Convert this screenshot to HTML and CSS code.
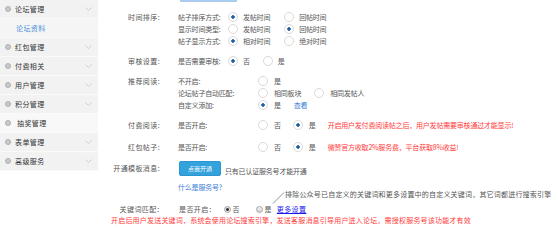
FILE: index.html
```html
<!DOCTYPE html>
<html lang="zh-CN">
<head>
<meta charset="utf-8">
<title>论坛资料</title>
<link rel="stylesheet" href="styles.css">
</head>
<body>
<div class="page">
  <aside class="side">
    <div class="nav-item"><span class="dot"></span><span class="nav-text">论坛管理</span><svg class="chev" viewBox="0 0 7 4"><polyline points="0.5,0.5 3.5,3.5 6.5,0.5"/></svg></div>
    <div class="nav-sub">论坛资料</div>
    <div class="nav-item"><span class="dot"></span><span class="nav-text">红包管理</span><svg class="chev" viewBox="0 0 7 4"><polyline points="0.5,0.5 3.5,3.5 6.5,0.5"/></svg></div>
    <div class="nav-item"><span class="dot"></span><span class="nav-text">付费相关</span><svg class="chev" viewBox="0 0 7 4"><polyline points="0.5,0.5 3.5,3.5 6.5,0.5"/></svg></div>
    <div class="nav-item"><span class="dot"></span><span class="nav-text">用户管理</span><svg class="chev" viewBox="0 0 7 4"><polyline points="0.5,0.5 3.5,3.5 6.5,0.5"/></svg></div>
    <div class="nav-item"><span class="dot"></span><span class="nav-text">积分管理</span><svg class="chev" viewBox="0 0 7 4"><polyline points="0.5,0.5 3.5,3.5 6.5,0.5"/></svg></div>
    <div class="nav-item active"><span class="dot"></span><span class="nav-text">抽奖管理</span></div>
    <div class="nav-item"><span class="dot"></span><span class="nav-text">表单管理</span><svg class="chev" viewBox="0 0 7 4"><polyline points="0.5,0.5 3.5,3.5 6.5,0.5"/></svg></div>
    <div class="nav-item"><span class="dot"></span><span class="nav-text">高级服务</span><svg class="chev" viewBox="0 0 7 4"><polyline points="0.5,0.5 3.5,3.5 6.5,0.5"/></svg></div>
  </aside>

  <main class="main">
    <div class="tabline"></div>

    <div class="group g1">
      <div class="label">时间排序:</div>
      <div class="fields">
        <div class="line"><span class="sub w50">帖子排序方式:</span><span class="opt o14"><i class="radio on"></i>发帖时间</span><span class="opt"><i class="radio"></i>回帖时间</span></div>
        <div class="line"><span class="sub w50">显示时间类型:</span><span class="opt o14"><i class="radio"></i>发帖时间</span><span class="opt"><i class="radio on"></i>回帖时间</span></div>
        <div class="line"><span class="sub w50">帖子显示方式:</span><span class="opt o14"><i class="radio on"></i>相对时间</span><span class="opt"><i class="radio"></i>绝对时间</span></div>
      </div>
    </div>

    <div class="group g2">
      <div class="label">审核设置:</div>
      <div class="fields">
        <div class="line"><span class="sub w50">是否需要审核:</span><span class="opt o13"><i class="radio on"></i>否</span><span class="opt"><i class="radio"></i>是</span></div>
      </div>
    </div>

    <div class="group g3">
      <div class="label">推荐阅读:</div>
      <div class="fields">
        <div class="line"><span class="sub w80">不开启:</span><span class="opt og6"><i class="radio"></i>是</span></div>
        <div class="line"><span class="sub w80">论坛帖子自动匹配:</span><span class="opt og6 o13"><i class="radio"></i>相同板块</span><span class="opt og6"><i class="radio"></i>相同发帖人</span></div>
        <div class="line"><span class="sub w80">自定义添加:</span><span class="opt og6 o13"><i class="radio on"></i>是</span><a class="link">查看</a></div>
      </div>
    </div>

    <div class="group g4">
      <div class="label">付费阅读:</div>
      <div class="fields">
        <div class="line"><span class="sub w80">是否开启:</span><span class="opt og6 o12"><i class="radio"></i>否</span><span class="opt og6 o12"><i class="radio on"></i>是</span><span class="warn">开启用户发付费阅读帖之后，用户发帖需要审核通过才能显示!</span></div>
      </div>
    </div>

    <div class="group g5">
      <div class="label">红包帖子:</div>
      <div class="fields">
        <div class="line"><span class="sub w80">是否开启:</span><span class="opt og6 o12"><i class="radio"></i>否</span><span class="opt og6 o12"><i class="radio on"></i>是</span><span class="warn">微赞官方收取2%服务费，平台获取8%收益!</span></div>
      </div>
    </div>

    <div class="group g6">
      <div class="label">开通模板消息:</div>
      <div class="fields row-center">
        <button class="btn">点我开通</button><span class="note">只有已认证服务号才能开通</span>
      </div>
    </div>

    <div class="group g7">
      <div class="label"></div>
      <div class="fields">
        <div class="line"><a class="link">什么是服务号?</a></div>
      </div>
    </div>

    <div class="group g8">
      <div class="label kw">关键词匹配：</div>
      <div class="kfields">
        <div class="line"><span class="sub w46">是否开启：</span><span class="nopt o16"><i class="nradio on"></i>否</span><span class="nopt o5"><i class="nradio"></i>是</span><a class="more">更多设置</a></div>
      </div>
    </div>

    <div class="warn-line">开启后用户发送关键词，系统会使用论坛搜索引擎，发送客服消息引导用户进入论坛。需授权服务号该功能才有效</div>

    <svg class="tip-line" viewBox="0 0 13 12"><line x1="1" y1="11.5" x2="12" y2="0.5"/></svg>
    <div class="tip">排除公众号已自定义的关键词和更多设置中的自定义关键词，其它词都进行搜索引擎</div>
  </main>
</div>
</body>
</html>
```

FILE: styles.css
```css
* { box-sizing: border-box; }
html, body { margin: 0; padding: 0; background: #fff; }
body {
  font-family: "Noto Sans CJK SC", "Noto Sans", sans-serif;
  font-size: 7px;
  letter-spacing: 0.4px;
  color: #555;
  width: 558px;
  height: 251px;
  overflow: hidden;
}
.page { display: flex; align-items: flex-start; }

/* sidebar */
.side {
  width: 98px;
  flex: none;
  background: #f2f2f2;
}
.nav-item {
  height: 19px;
  display: flex;
  align-items: center;
  padding-left: 5px;
  border-bottom: 1px solid #fafafa;
  color: #333;
}
.dot {
  width: 6px;
  height: 6px;
  border-radius: 50%;
  background: #c9c9c9;
  border: 1px solid #b0b0b0;
  margin-right: 4px;
  flex: none;
}
.nav-text { flex: 1; }
.chev {
  width: 7px;
  height: 4px;
  margin-right: 6px;
  fill: none;
  stroke: #c4c4c4;
  stroke-width: 0.8;
}
.nav-sub {
  height: 19px;
  display: flex;
  align-items: center;
  padding-left: 16px;
  color: #4a90d9;
  background: #f5f5f5;
  border-bottom: 1px solid #fafafa;
}
.nav-item.active { background: #f8f8f8; }
.nav-item.active .nav-text { padding-left: 2px; }

/* main */
.main {
  flex: 1;
  position: relative;
  height: 251px;
}
.tabline {
  width: 57px;
  height: 2px;
  margin-left: 82px;
  background: #a9cbee;
  margin-bottom: 9px;
}
.group {
  display: grid;
  grid-template-columns: 62px 1fr;
  column-gap: 18px;
  line-height: 12px;
}
.label {
  text-align: right;
  white-space: nowrap;
}
.label.kw { margin-right: -4px; }
.fields {
  min-width: 0;
  font-size: 7px;
  letter-spacing: -0.2px;
}
.kfields { min-width: 0; }
.line {
  display: flex;
  align-items: center;
  height: 12px;
  white-space: nowrap;
}
.sub { flex: none; }
.w50 { width: 50px; }
.w80 { width: 80px; }
.w46 { width: 46px; padding-left: 1px; }

.opt {
  display: inline-flex;
  align-items: center;
  gap: 5px;
  margin-right: 11px;
}
.og6 { gap: 6px; }
.o12 { margin-right: 12px; }
.o13 { margin-right: 13px; }
.o14 { margin-right: 14px; }

.radio {
  display: inline-block;
  width: 10px;
  height: 10px;
  border-radius: 50%;
  border: 1px solid #d9d9d9;
  background: #fff;
  flex: none;
}
.radio.on {
  background: radial-gradient(circle, #1d5fa3 0 1.5px, #fff 1.9px);
}

.nopt {
  display: inline-flex;
  align-items: center;
  gap: 1.5px;
}
.o16 { margin-right: 16px; }
.o5 { margin-right: 5px; }
.nradio {
  display: inline-block;
  width: 7px;
  height: 7px;
  border-radius: 50%;
  border: 1px solid #a8a8a8;
  background: linear-gradient(#f4f4f4, #d2d2d2);
  flex: none;
}
.nradio.on {
  background: radial-gradient(circle, #333 0 1.2px, #e6e6e6 1.6px, #cfcfcf);
}

.link { color: #3b7dd8; text-decoration: none; }
.more { color: #1a1aee; text-decoration: underline; }
.warn { color: #ff3b3b; }

.g2, .g3, .g4, .g6 { margin-top: 8px; }
.g5, .g8 { margin-top: 10px; }
.g7 { margin-top: 5px; }

.g6 .label { line-height: 15px; }
.row-center {
  display: flex;
  align-items: center;
  height: 15px;
}
.btn {
  font-family: inherit;
  font-size: 6px;
  letter-spacing: 0;
  color: #fff;
  background: #34a2dc;
  border: 1px solid #2b95cf;
  border-radius: 2px;
  width: 42px;
  height: 15px;
  line-height: 13px;
  padding: 0;
  margin: 0 4px 0 1px;
  text-align: center;
  cursor: pointer;
}
.note { padding-top: 4px; }

.warn-line {
  color: #ff3b3b;
  line-height: 11px;
  padding-left: 13px;
  letter-spacing: 0.2px;
  white-space: nowrap;
}

.tip-line {
  position: absolute;
  left: 174px;
  top: 192px;
  width: 13px;
  height: 12px;
  stroke: #777;
  stroke-width: 0.8;
}
.tip {
  position: absolute;
  left: 187px;
  top: 188px;
  line-height: 12px;
  letter-spacing: 0.2px;
  white-space: nowrap;
  color: #555;
}
```
